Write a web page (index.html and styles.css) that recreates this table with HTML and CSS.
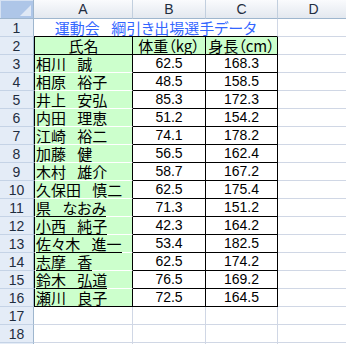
FILE: index.html
```html
<!DOCTYPE html>
<html lang="ja">
<head>
<meta charset="utf-8">
<link rel="stylesheet" href="styles.css">
</head>
<body>
<div class="sheet">
  <div class="corner"><span class="tri"></span></div>
  <div class="ch">A</div>
  <div class="ch">B</div>
  <div class="ch">C</div>
  <div class="ch">D</div>

  <div class="rh">1</div>
  <div class="c title jp">運動会 綱引き出場選手データ</div>
  <div class="c"></div>

  <div class="rh">2</div>
  <div class="c t name head jp">氏名</div>
  <div class="c t num jp">体重（kg）</div>
  <div class="c t num jp">身長（cm）</div>
  <div class="c"></div>

  <div class="rh">3</div>
  <div class="c t name jp">相川 誠</div>
  <div class="c t num">62.5</div>
  <div class="c t num">168.3</div>
  <div class="c"></div>

  <div class="rh">4</div>
  <div class="c t name jp">相原 裕子</div>
  <div class="c t num">48.5</div>
  <div class="c t num">158.5</div>
  <div class="c"></div>

  <div class="rh">5</div>
  <div class="c t name jp">井上 安弘</div>
  <div class="c t num">85.3</div>
  <div class="c t num">172.3</div>
  <div class="c"></div>

  <div class="rh">6</div>
  <div class="c t name jp">内田 理恵</div>
  <div class="c t num">51.2</div>
  <div class="c t num">154.2</div>
  <div class="c"></div>

  <div class="rh">7</div>
  <div class="c t name jp">江崎 裕二</div>
  <div class="c t num">74.1</div>
  <div class="c t num">178.2</div>
  <div class="c"></div>

  <div class="rh">8</div>
  <div class="c t name jp">加藤 健</div>
  <div class="c t num">56.5</div>
  <div class="c t num">162.4</div>
  <div class="c"></div>

  <div class="rh">9</div>
  <div class="c t name jp">木村 雄介</div>
  <div class="c t num">58.7</div>
  <div class="c t num">167.2</div>
  <div class="c"></div>

  <div class="rh">10</div>
  <div class="c t name jp">久保田 慎二</div>
  <div class="c t num">62.5</div>
  <div class="c t num">175.4</div>
  <div class="c"></div>

  <div class="rh">11</div>
  <div class="c t name jp"><span class="ul">県 なおみ</span></div>
  <div class="c t num">71.3</div>
  <div class="c t num">151.2</div>
  <div class="c"></div>

  <div class="rh">12</div>
  <div class="c t name jp"><span class="ul">小西 純子</span></div>
  <div class="c t num">42.3</div>
  <div class="c t num">164.2</div>
  <div class="c"></div>

  <div class="rh">13</div>
  <div class="c t name jp"><span class="ul">佐々木 進一</span></div>
  <div class="c t num">53.4</div>
  <div class="c t num">182.5</div>
  <div class="c"></div>

  <div class="rh">14</div>
  <div class="c t name jp"><span class="ul">志摩 香</span></div>
  <div class="c t num">62.5</div>
  <div class="c t num">174.2</div>
  <div class="c"></div>

  <div class="rh">15</div>
  <div class="c t name jp"><span class="ul">鈴木 弘道</span></div>
  <div class="c t num">76.5</div>
  <div class="c t num">169.2</div>
  <div class="c"></div>

  <div class="rh">16</div>
  <div class="c t name last jp"><span class="ul">瀬川 良子</span></div>
  <div class="c t num">72.5</div>
  <div class="c t num">164.5</div>
  <div class="c"></div>

  <div class="rh">17</div>
  <div class="c"></div>
  <div class="c"></div>
  <div class="c"></div>
  <div class="c"></div>

  <div class="rh">18</div>
  <div class="c"></div>
  <div class="c"></div>
  <div class="c"></div>
  <div class="c"></div>
</div>
</body>
</html>
```

FILE: styles.css
```css
* { box-sizing: border-box; }
html, body {
  margin: 0;
  padding: 0;
  background: #ffffff;
  overflow: hidden;
}
.sheet {
  display: grid;
  grid-template-columns: 34px 99px 73px 72px 72px;
  grid-template-rows: 19px;
  grid-auto-rows: 18px;
  width: 350px;
  font-family: "Liberation Sans", Arial, sans-serif;
  font-size: 14px;
  color: #000;
}
.sheet::after {
  content: "";
  grid-column: 1 / -1;
  background: linear-gradient(90deg, #e4ecf7 0 33px, #9eb6ce 33px 34px, #fff 34px 132px, #d0d7e5 132px 133px, #fff 133px 205px, #d0d7e5 205px 206px, #fff 206px 277px, #d0d7e5 277px 278px, #fff 278px);
}
.corner {
  position: relative;
  background: #aec6e8;
  border-right: 1px solid #9eb6ce;
  border-bottom: 1px solid #9eb6ce;
  box-shadow: inset 1px 1px 0 #d6e2f3;
}
.tri {
  position: absolute;
  right: 2px;
  bottom: 2px;
  width: 0;
  height: 0;
  border-left: 11px solid transparent;
  border-bottom: 11px solid #dfe8f5;
}
.ch {
  background: linear-gradient(#fafbfd, #e3e8ef);
  border-right: 1px solid #c2cfde;
  border-bottom: 1px solid #9eb6ce;
  text-align: center;
  line-height: 18px;
  color: #1f2d3f;
  font-size: 14px;
}
.rh {
  background: #e4ecf7;
  border-right: 1px solid #9eb6ce;
  border-bottom: 1px solid #c5d3e6;
  text-align: center;
  line-height: 18px;
  color: #1f2d3f;
  font-size: 14px;
}
.c {
  border-right: 1px solid #d0d7e5;
  border-bottom: 1px solid #d0d7e5;
  line-height: 17px;
  white-space: pre;
  overflow: visible;
}
.jp {
  font-family: "Noto Sans CJK JP", "Noto Sans", sans-serif;
  font-feature-settings: "palt";
  font-size: 15px;
  word-spacing: 8px;
}
.title {
  grid-column: span 3;
  text-align: center;
  color: #3366ff;
  border-bottom: 1px solid #000;
  border-right: 1px solid #d0d7e5;
}
.t {
  background: #ffffff;
  border-right: 1px solid #000;
  border-bottom: 1px solid #000;
}
.name {
  background: #ccffcc;
  border-left: 1px solid #000;
  border-bottom: 1px solid #ffffff;
  padding-left: 1px;
  display: flex;
  align-items: stretch;
}
.name.head {
  justify-content: center;
  border-bottom: 1px solid #000;
  padding-left: 0;
}
.name.last {
  border-bottom: 1px solid #000;
}
.num {
  text-align: center;
}
.t.num.jp {
  background: #ccffcc;
}
.ul {
  display: inline-block;
  box-shadow: 0 1px 0 #000;
}
```
